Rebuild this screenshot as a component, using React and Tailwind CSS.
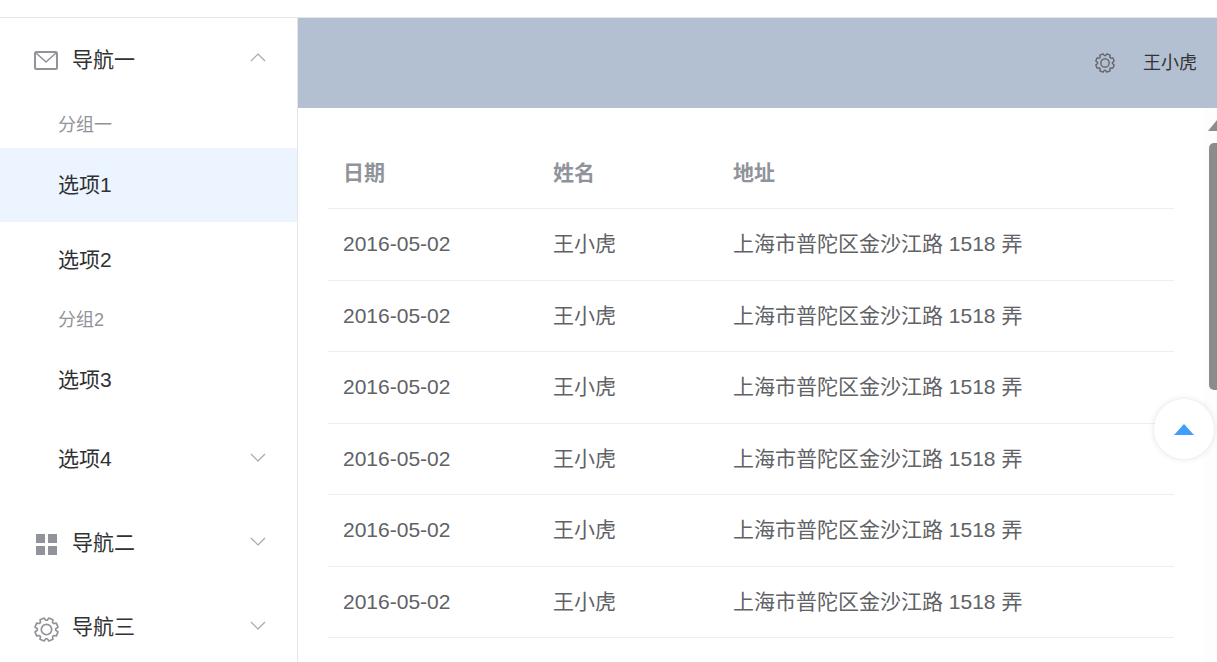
import React from 'react';

const FONT = "font-['Liberation_Sans','Noto_Sans_CJK_SC',sans-serif]";

function Chevron({ up }) {
  return (
    <svg className={`w-[16px] h-[10px] text-[#a3a6ad] ${up ? 'mb-[6px]' : 'mb-[2px]'}`} viewBox="0 0 16 10" fill="none" stroke="currentColor" strokeWidth="1.2">
      <polyline points={up ? '1,9 8,2 15,9' : '1,1 8,8 15,1'} />
    </svg>
  );
}

function MailIcon() {
  return (
    <svg className="w-[24px] h-[19px] text-[#909399] mt-[1px]" viewBox="0 0 24 19" fill="none" stroke="currentColor" strokeWidth="2">
      <rect x="1" y="1" width="22" height="17" rx="1.5" />
      <polyline points="1.5,1.5 12,11 22.5,1.5" strokeWidth="1.6" />
    </svg>
  );
}

function GridIcon() {
  return (
    <svg className="w-[21px] h-[21px] text-[#909399] mt-[2px]" viewBox="0 0 21 21" fill="currentColor">
      <rect x="0" y="0" width="9" height="9" />
      <rect x="12" y="0" width="9" height="9" />
      <rect x="0" y="12" width="9" height="9" />
      <rect x="12" y="12" width="9" height="9" />
    </svg>
  );
}

// eight teeth round a wide ring, like the element-ui setting icon
function gearPath() {
  const pts = [];
  for (let i = 0; i < 8; i++) {
    const a = (i * Math.PI) / 4 + Math.PI / 8;
    const step = Math.PI / 11;
    [[-step * 1.1, 8.9], [-step * 0.65, 11.3], [step * 0.65, 11.3], [step * 1.1, 8.9]].forEach(([d, r]) => {
      pts.push(`${(12 + r * Math.cos(a + d)).toFixed(2)},${(12 + r * Math.sin(a + d)).toFixed(2)}`);
    });
  }
  return `M${pts.join('L')}Z`;
}

function GearIcon({ className }) {
  return (
    <svg className={className} viewBox="0 0 24 24" fill="none" stroke="currentColor" strokeWidth="1.6" strokeLinejoin="round">
      <path d={gearPath()} />
      <circle cx="12" cy="12" r="5" />
    </svg>
  );
}

function NavTitle({ icon, label, up }) {
  return (
    <div className="h-[84px] flex items-center pl-[34px] pr-[31px] text-[#303133] text-[21px]">
      <div className="w-[24px] flex justify-center">{icon}</div>
      <span className="ml-[14px] flex-1">{label}</span>
      <Chevron up={up} />
    </div>
  );
}

function GroupTitle({ label, className }) {
  return <div className={`pl-[58px] flex items-center text-[18px] text-[#909399] ${className}`}>{label}</div>;
}

function Option({ label, active, className, children }) {
  return (
    <div className={`pl-[58px] pr-[31px] flex items-center justify-between text-[21px] text-[#303133] ${active ? 'bg-[#ecf5ff]' : ''} ${className}`}>
      <span>{label}</span>
      {children}
    </div>
  );
}

function Row({ date, name, address, header }) {
  return (
    <div className={`flex h-[71.45px] shrink-0 items-center border-b border-[#ebeef5] text-[21px] ${header ? 'font-bold text-[#909399]' : 'pb-[1px] text-[#606266]'}`}>
      <div className="w-[225px] pl-[15px]">{date}</div>
      <div className="w-[180px]">{name}</div>
      <div>{address}</div>
    </div>
  );
}

export default function App() {
  const rows = Array.from({ length: 7 });

  return (
    <div className={`${FONT} relative h-[662px] overflow-hidden bg-white`}>
      <div className="h-[18px] border-b border-[#e6e6e6]" />
      <div className="flex h-[644px]">
        {/* Sidebar */}
        <aside className="w-[298px] shrink-0 border-r border-[#e6e6e6] overflow-hidden">
          <NavTitle icon={<MailIcon />} label="导航一" up />
          <GroupTitle label="分组一" className="h-[46px]" />
          <Option label="选项1" active className="h-[74px] pb-[1px]" />
          <Option label="选项2" className="h-[76px]" />
          <GroupTitle label="分组2" className="h-[44px]" />
          <Option label="选项3" className="h-[76px]" />
          <Option label="选项4" className="h-[83px] pb-[2px]"><Chevron /></Option>
          <NavTitle icon={<GridIcon />} label="导航二" />
          <NavTitle icon={<GearIcon className="w-[25px] h-[25px] shrink-0 text-[#909399] mt-[4px]" />} label="导航三" />
        </aside>

        {/* Main */}
        <div className="flex-1 min-w-0 flex flex-col">
          <header className="h-[90px] shrink-0 bg-[#b3c0d1] flex items-center justify-end pr-[20px] text-[#333333] text-[18px]">
            <GearIcon className="w-[20px] h-[20px] text-[#606266] mr-[28px]" />
            <span>王小虎</span>
          </header>
          <div className="flex-1 overflow-hidden pl-[30px] pr-[43px] pt-[30px]">
            <Row date="日期" name="姓名" address="地址" header />
            {rows.map((_, i) => (
              <Row key={i} date="2016-05-02" name="王小虎" address="上海市普陀区金沙江路 1518 弄" />
            ))}
          </div>
        </div>
      </div>

      {/* Scrollbar */}
      <div className="absolute right-0 top-[108px] bottom-0 w-[13px] bg-[#fdfdfd]">
        <div className="ml-[4px] mt-[12px] h-0 w-0 border-x-[9px] border-b-[11px] border-x-transparent border-b-[#8c8c8c]" />
        <div className="absolute top-[35px] left-[5px] w-[12px] h-[247px] rounded-[5px] bg-[#8c8c8c]" />
      </div>

      {/* Back to top */}
      <div className="absolute left-[1154px] top-[399px] w-[60px] h-[60px] rounded-full bg-white shadow-[0_0_6px_rgba(0,0,0,0.12)] flex items-center justify-center">
        <div className="h-0 w-0 border-x-[10px] border-b-[11px] border-x-transparent border-b-[#409eff]" />
      </div>
    </div>
  );
}
